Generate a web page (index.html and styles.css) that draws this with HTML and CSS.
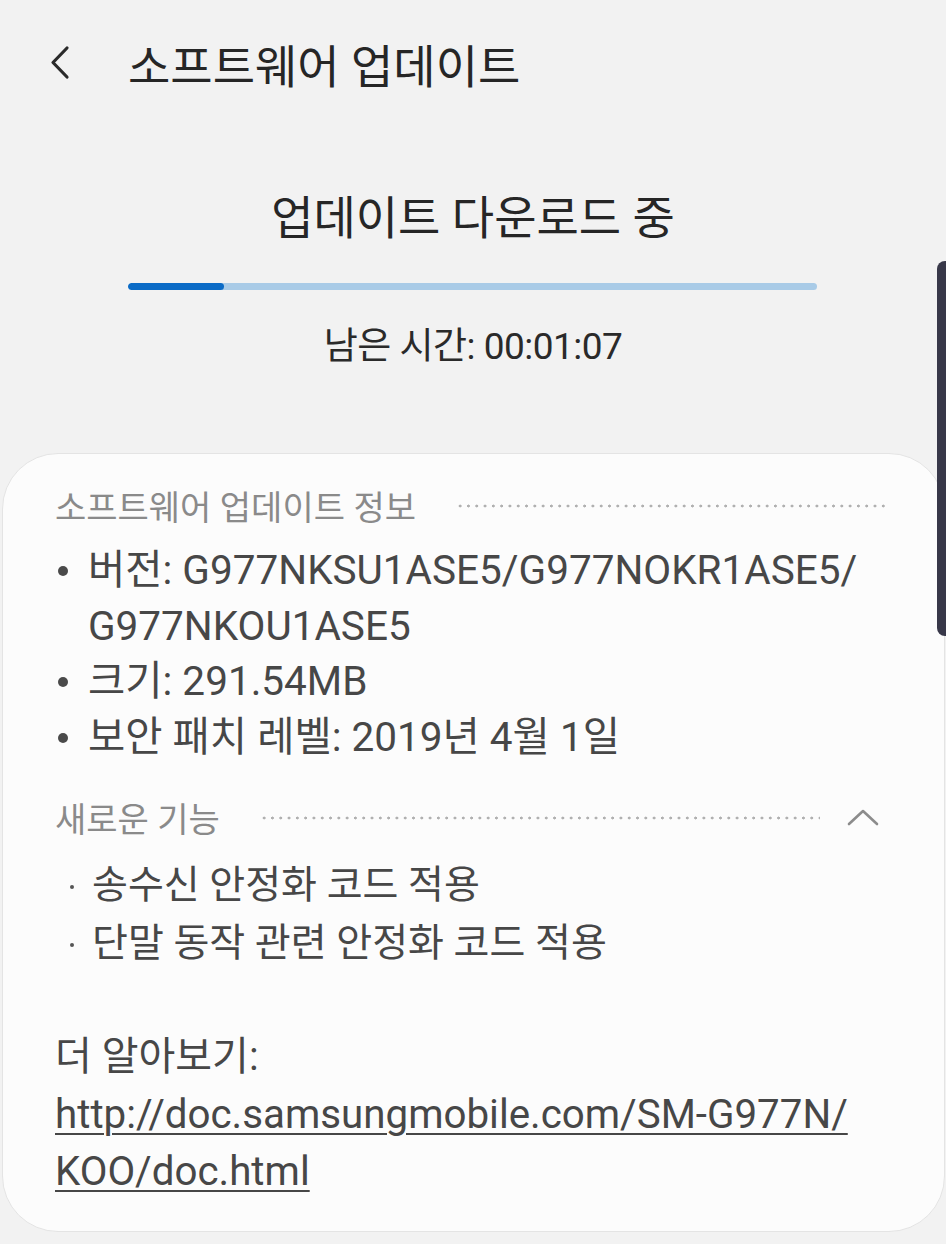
FILE: index.html
```html
<!DOCTYPE html>
<html lang="ko">
<head>
  <meta charset="UTF-8" />
  <meta name="viewport" content="width=device-width, initial-scale=1" />
  <title>소프트웨어 업데이트</title>
  <link rel="stylesheet" href="styles.css">
</head>
<body>

<header class="appbar">
  <svg class="back" width="24" height="40" viewBox="0 0 24 40">
    <path d="M19 5 L5 19.5 L19 34" fill="none" stroke="#2a2a2a" stroke-width="3.2" stroke-linecap="round" stroke-linejoin="round"/>
  </svg>
  <h1>소프트웨어 업데이트</h1>
</header>

<div class="status">
  <h2>업데이트 다운로드 중</h2>
  <div class="progress"><div class="progress-fill" style="width:14%"></div></div>
  <p class="remain">남은 시간: 00:01:07</p>
</div>

<section class="card">
  <div class="sec-head">
    <span>소프트웨어 업데이트 정보</span>
    <div class="dots"></div>
  </div>
  <ul class="info">
    <li>버전: G977NKSU1ASE5/G977NOKR1ASE5/<br>G977NKOU1ASE5</li>
    <li>크기: 291.54MB</li>
    <li>보안 패치 레벨: 2019년 4월 1일</li>
  </ul>

  <div class="sec-head">
    <span>새로운 기능</span>
    <div class="dots"></div>
    <svg class="collapse" width="34" height="22" viewBox="0 0 34 22">
      <path d="M3 18 L17 5 L31 18" fill="none" stroke="#8c8c8c" stroke-width="2.6" stroke-linecap="round" stroke-linejoin="round"/>
    </svg>
  </div>
  <ul class="features">
    <li>송수신 안정화 코드 적용</li>
    <li>단말 동작 관련 안정화 코드 적용</li>
  </ul>

  <p class="more">더 알아보기:<br><a href="#">http://doc.samsungmobile.com/SM-G977N/<br>KOO/doc.html</a></p>
</section>

<div class="scroll-thumb"></div>

</body>
</html>
```

FILE: styles.css
```css
* { box-sizing: border-box; margin: 0; padding: 0; }

body {
  font-family: Roboto, 'Noto Sans CJK KR', sans-serif;
  background: #f2f2f2;
  color: #2a2a2a;
  width: 946px;
  height: 1244px;
  overflow: hidden;
  position: relative;
}

.appbar {
  display: flex;
  align-items: center;
  height: 126px;
  padding-left: 48px;
}

.appbar .back {
  margin-right: 56px;
}

.appbar h1 {
  font-size: 46px;
  font-weight: 400;
  color: #262626;
}

.status {
  text-align: center;
  padding-top: 62px;
}

.status h2 {
  font-size: 46px;
  font-weight: 400;
  color: #262626;
  line-height: 60px;
}

.progress {
  width: 689px;
  height: 7px;
  margin: 35px 0 0 128px;
  border-radius: 4px;
  background: #a9cbe7;
  overflow: hidden;
}

.progress-fill {
  height: 100%;
  background: #0b6bc6;
  border-radius: 4px;
}

.remain {
  font-size: 37px;
  color: #2a2a2a;
  margin-top: 33px;
  line-height: 48px;
  letter-spacing: -0.5px;
}

.card {
  margin: 82px 1px 0 2px;
  background: #fcfcfc;
  border: 1px solid #e4e4e4;
  border-radius: 56px;
  padding: 27px 0 38px 52px;
  height: 779px;
}

.sec-head {
  display: flex;
  align-items: center;
  height: 48px;
  color: #8a8a8a;
  font-size: 34px;
}

.sec-head .dots {
  flex: 1;
  height: 4px;
  margin: 2px 56px 0 40px;
  background-image: radial-gradient(circle, #b0b0b0 1.3px, transparent 1.7px);
  background-size: 8.3px 4px;
}

.sec-head .collapse {
  margin-right: 64px;
  margin-left: -30px;
}

.info {
  list-style: none;
  margin: 14px 0 28px;
  font-size: 40.5px;
  color: #474747;
  line-height: 55.5px;
}

.info li {
  position: relative;
  padding-left: 33px;
}

.info li::before {
  content: "";
  position: absolute;
  left: 3px;
  top: 23px;
  width: 10px;
  height: 10px;
  border-radius: 50%;
  background: #4a4a4a;
}

.features {
  list-style: none;
  margin-top: 15px;
  font-size: 39px;
  color: #474747;
  line-height: 58px;
}

.features li {
  position: relative;
  padding-left: 37px;
}

.features li::before {
  content: "";
  position: absolute;
  left: 15px;
  top: 29px;
  width: 4px;
  height: 4px;
  border-radius: 50%;
  background: #555;
}

.more {
  margin-top: 56px;
  font-size: 40px;
  color: #474747;
  line-height: 57.5px;
}

.more a {
  color: #474747;
  font-size: 40.3px;
  text-decoration: underline;
  text-decoration-thickness: 2px;
  text-underline-offset: 5px;
}

.scroll-thumb {
  position: absolute;
  right: 0;
  top: 261px;
  width: 9px;
  height: 375px;
  background: #383849;
  border-radius: 8px 0 0 8px;
}
```
